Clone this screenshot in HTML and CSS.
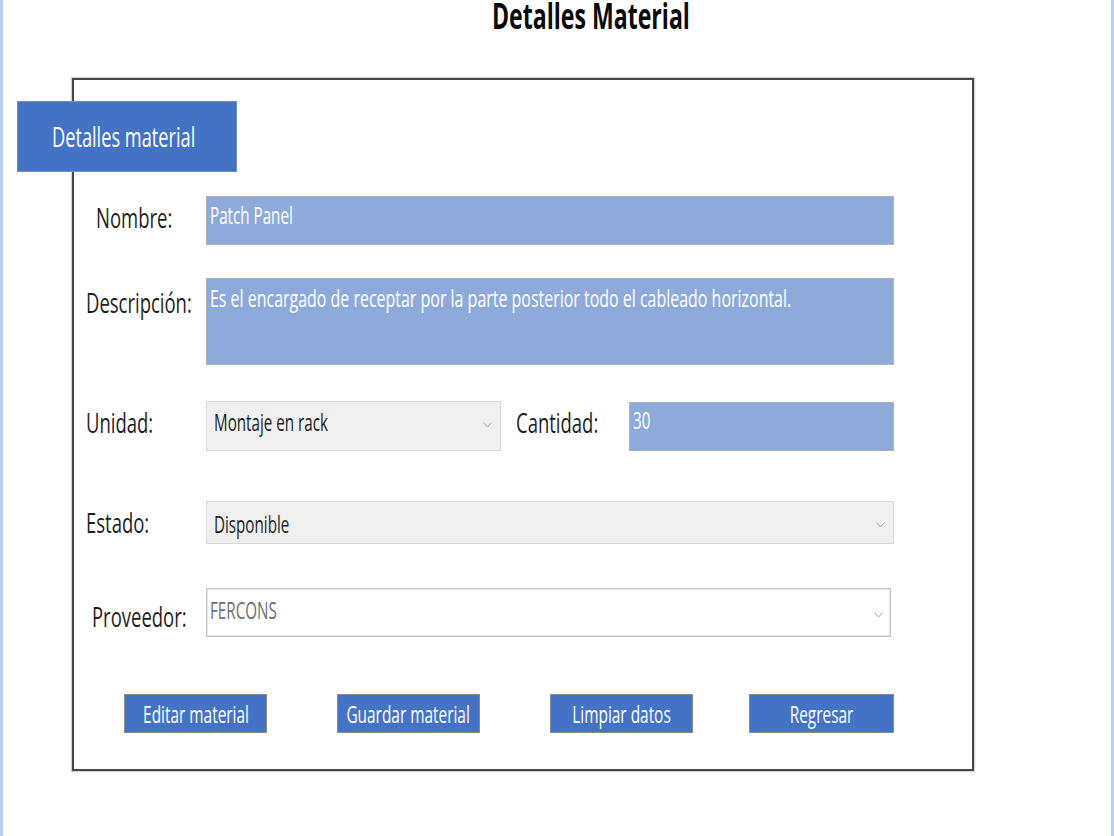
FILE: index.html
```html
<!DOCTYPE html>
<html lang="es">
<head>
<meta charset="utf-8">
<title>Detalles Material</title>
<link rel="stylesheet" href="styles.css">
</head>
<body>
<div class="window">
  <h1 class="title"><span class="t t-title">Detalles Material</span></h1>
  <section class="frame">
    <div class="tab"><span class="t t-tab">Detalles material</span></div>

    <div class="row row-nombre">
      <div class="lbl lbl-nombre"><span class="t">Nombre:</span></div>
      <div class="field blue f-nombre"><span class="t">Patch Panel</span></div>
    </div>

    <div class="row row-desc">
      <div class="lbl lbl-desc"><span class="t">Descripción:</span></div>
      <div class="field blue f-desc"><span class="t t-desc">Es el encargado de receptar por la parte posterior todo el cableado horizontal.</span></div>
    </div>

    <div class="row row-unidad">
      <div class="lbl"><span class="t">Unidad:</span></div>
      <div class="field combo f-unidad">
        <span class="t">Montaje en rack</span>
        <svg class="chev chev-u" viewBox="0 0 9 6" aria-hidden="true"><polyline points="0.5,0.5 4.5,5 8.5,0.5" fill="none" stroke="#a6a6a6" stroke-width="1"/></svg>
      </div>
      <div class="lbl lbl-cant"><span class="t">Cantidad:</span></div>
      <div class="field blue f-cant"><span class="t">30</span></div>
    </div>

    <div class="row row-estado">
      <div class="lbl"><span class="t">Estado:</span></div>
      <div class="field combo f-estado">
        <span class="t">Disponible</span>
        <svg class="chev chev-e" viewBox="0 0 9 6" aria-hidden="true"><polyline points="0.5,0.5 4.5,5 8.5,0.5" fill="none" stroke="#a6a6a6" stroke-width="1"/></svg>
      </div>
    </div>

    <div class="row row-prov">
      <div class="lbl lbl-prov"><span class="t">Proveedor:</span></div>
      <div class="field f-prov">
        <span class="t">FERCONS</span>
        <svg class="chev chev-p" viewBox="0 0 9 6" aria-hidden="true"><polyline points="0.5,0.5 4.5,5 8.5,0.5" fill="none" stroke="#a6a6a6" stroke-width="1"/></svg>
      </div>
    </div>

    <div class="actions">
      <button class="btn" type="button"><span class="t">Editar material</span></button>
      <button class="btn" type="button"><span class="t">Guardar material</span></button>
      <button class="btn" type="button"><span class="t">Limpiar datos</span></button>
      <button class="btn btn-back" type="button"><span class="t">Regresar</span></button>
    </div>
  </section>
</div>
</body>
</html>
```

FILE: styles.css
```css
* { box-sizing: border-box; }

html, body {
  margin: 0;
  padding: 0;
  background: #ffffff;
}

body {
  font-family: "Open Sans", "Noto Sans", sans-serif;
  color: #1c1c1c;
}

.window {
  width: 1114px;
  height: 836px;
  border-left: 3px solid #b7d0f2;
  border-right: 3px solid #b7d0f2;
  overflow: hidden;
}

/* condensed text look */
.t {
  display: inline-block;
  white-space: nowrap;
  transform: scaleX(0.66);
  transform-origin: 0 50%;
}

.title {
  margin: 0;
  height: 30px;
  padding: 3px 0 0 489px;
  line-height: 26px;
  font-size: 35px;
  font-weight: 700;
  color: #0a0a0a;
}

.t-title { transform: scaleX(0.66); }

.frame {
  margin: 48px 0 0 69px;
  width: 902px;
  height: 693px;
  border: 2px solid #474747;
  box-shadow: 0 0 1px 1px rgba(0, 0, 0, 0.18);
}

.tab {
  margin: 21px 0 0 -57px;
  width: 220px;
  height: 71px;
  background: #4472c4;
  border: 1px solid #6a8fd2;
  padding: 15px 0 0 34px;
  color: #ffffff;
  font-size: 28px;
  line-height: 38px;
}

.t-tab { transform: scaleX(0.65); }

.row {
  display: flex;
  align-items: flex-start;
  padding-left: 12px;
}

.row-nombre { margin-top: 24px; }
.row-desc { margin-top: 33px; }
.row-unidad { margin-top: 36px; }
.row-estado { margin-top: 50px; }
.row-prov { margin-top: 44px; }

.lbl {
  flex: 0 0 120px;
  min-width: 0;
  font-size: 28px;
  line-height: 38px;
  margin-top: 2px;
  color: #1e1e1e;
}

.lbl-nombre { padding-left: 10px; }
.lbl-desc { margin-top: 5px; }
.lbl-prov { padding-left: 6px; margin-top: 9px; }
.lbl-cant { flex-basis: 113px; margin-left: 15px; }

.field {
  display: flex;
  align-items: flex-start;
  flex: 0 0 auto;
  min-width: 0;
  font-size: 23px;
  line-height: 28px;
  border: 1px solid #bdbdbd;
}

.blue {
  background: #8eaadb;
  color: #ffffff;
  border-color: #b2b2b2;
}

.combo {
  background: #f0f0f0;
  border-color: #d9d9d9;
  color: #1e1e1e;
}

.f-nombre { width: 688px; height: 49px; padding: 4px 0 0 3px; }
.f-desc { width: 688px; height: 87px; padding: 5px 0 0 3px; font-size: 24px; }
.t-desc { transform: scaleX(0.665); }
.f-unidad { width: 295px; height: 50px; padding: 6px 0 0 7px; }
.f-cant { width: 265px; height: 49px; padding: 3px 0 0 3px; margin-top: 1px; }
.f-estado { width: 688px; height: 43px; padding: 8px 0 0 7px; }
.f-prov {
  width: 685px;
  height: 49px;
  padding: 7px 0 0 3px;
  background: #ffffff;
  border-color: #c4c4c4;
  box-shadow: inset 0 0 0 1px #e4e4e4;
  color: #6e6e6e;
}

.chev {
  flex: 0 0 9px;
  width: 9px;
  height: 6px;
  margin-left: auto;
  align-self: center;
}

.chev-u { margin-right: 8px; margin-bottom: 8px; }
.chev-e { margin-right: 8px; margin-bottom: 3px; }
.chev-p { margin-right: 7px; margin-bottom: 3px; }

.actions {
  display: flex;
  gap: 70px;
  margin: 57px 0 0 50px;
}

.btn {
  width: 143px;
  height: 39px;
  padding: 0;
  background: #4472c4;
  color: #ffffff;
  border: 1px solid #8a8a8a;
  font-family: inherit;
  font-size: 23px;
  line-height: 28px;
  display: flex;
  align-items: center;
  justify-content: center;
}

.btn .t {
  transform: scaleX(0.67);
  transform-origin: 50% 50%;
}

.btn-back {
  width: 145px;
  margin-left: -14px;
}
```
